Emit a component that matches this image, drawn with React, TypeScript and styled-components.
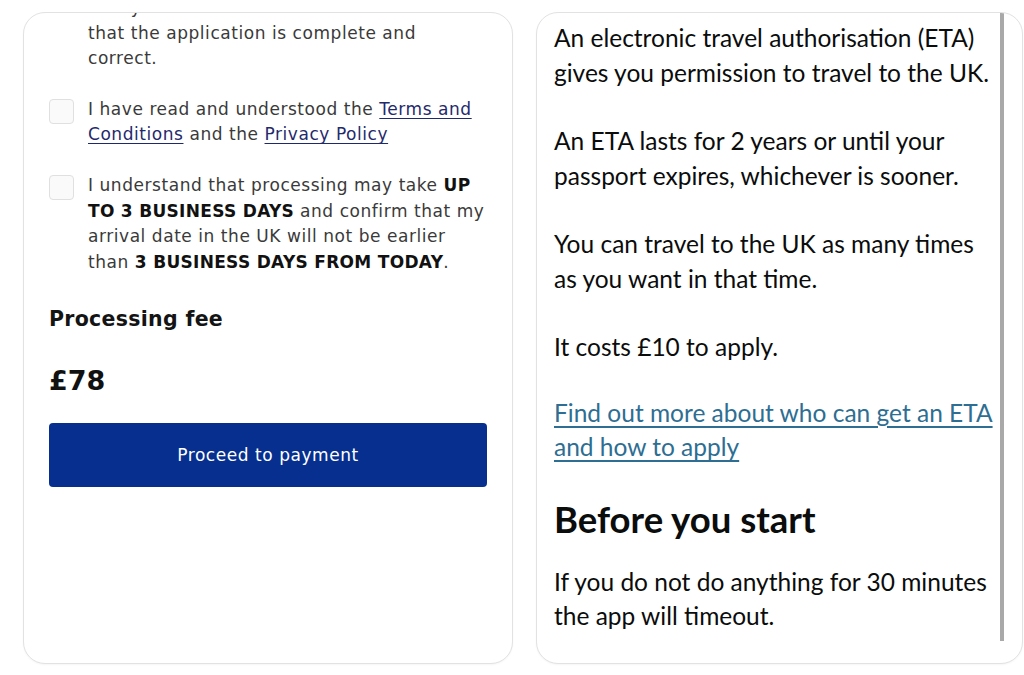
import React from 'react'
import styled, { createGlobalStyle } from 'styled-components'

const GlobalStyle = createGlobalStyle`
    html, body {
        margin: 0;
        padding: 0;
        background: #ffffff;
    }
    * {
        box-sizing: border-box;
    }
`

const App: React.FC = () => {
    return (
        <>
            <GlobalStyle />
            <Page>
                <Card>
                    <LeftContent>
                        <CheckRow>
                            <BoxSpacer />
                            <CheckText>
                                else you must have confirmed with them that the application is complete and correct.
                            </CheckText>
                        </CheckRow>
                        <CheckRow>
                            <CheckBox />
                            <CheckText>
                                I have read and understood the <SmallLink>Terms and Conditions</SmallLink> and the <SmallLink>Privacy Policy</SmallLink>
                            </CheckText>
                        </CheckRow>
                        <CheckRow>
                            <CheckBox />
                            <CheckText>
                                I understand that processing may take <b>UP TO 3 BUSINESS DAYS</b> and confirm that my arrival date in the UK will not be earlier than <b>3 BUSINESS DAYS FROM TODAY</b>.
                            </CheckText>
                        </CheckRow>
                        <FeeLabel>Processing fee</FeeLabel>
                        <FeeAmount>£78</FeeAmount>
                        <PayButton>Proceed to payment</PayButton>
                    </LeftContent>
                </Card>
                <Card>
                    <RightContent>
                        <Para>An electronic travel authorisation (ETA) gives you permission to travel to the UK.</Para>
                        <Para>An ETA lasts for 2 years or until your passport expires, whichever is sooner.</Para>
                        <Para>You can travel to the UK as many times as you want in that time.</Para>
                        <Para $gap={31}>It costs £10 to apply.</Para>
                        <Para><BigLink>Find out more about who can get an ETA and how to apply</BigLink></Para>
                        <Heading>Before you start</Heading>
                        <Para $gap={0}>If you do not do anything for 30 minutes the app will timeout.</Para>
                    </RightContent>
                    <ScrollThumb />
                </Card>
            </Page>
        </>
    )
}

const Page = styled.div`
    width: 1024px;
    height: 675px;
    display: grid;
    grid-template-columns: 490px 487px;
    column-gap: 23px;
    padding: 12px 0 11px 23px;
`
const Card = styled.div`
    position: relative;
    height: 652px;
    border: 1px solid #e2e2e2;
    border-radius: 22px;
    overflow: hidden;
    background: #ffffff;
    box-shadow: 0 1px 2px rgba(0,0,0,.04);
`
const LeftContent = styled.div`
    margin-top: -18px;
    padding: 0 20px 0 25px;
    font-family: "DejaVu Sans", "Noto Sans", sans-serif;
    color: #3a3a3a;
`
const CheckRow = styled.div`
    display: flex;
    align-items: flex-start;
    gap: 14px;
    margin-bottom: 25px;
`
const CheckBox = styled.div`
    flex: 0 0 25px;
    height: 25px;
    margin-top: 2px;
    border: 1px solid #e0e0e0;
    border-radius: 4px;
    background: #fafafa;
`
const BoxSpacer = styled.div`
    flex: 0 0 25px;
`
const CheckText = styled.div`
    max-width: 399px;
    font-size: 17px;
    line-height: 25.6px;
    letter-spacing: 0.55px;
    b {
        font-weight: 700;
        color: #111111;
        letter-spacing: 0.3px;
    }
`
const SmallLink = styled.span`
    color: #1f2a6d;
    text-decoration: underline;
    text-underline-offset: 3px;
    text-decoration-thickness: 1px;
`
const FeeLabel = styled.div`
    margin-top: 30px;
    font-size: 20.5px;
    font-weight: 700;
    color: #141414;
    line-height: 28px;
    letter-spacing: 0.3px;
`
const FeeAmount = styled.div`
    margin-top: 31px;
    font-size: 27px;
    font-weight: 700;
    color: #111111;
    line-height: 34px;
`
const PayButton = styled.div`
    margin-top: 25px;
    margin-right: 5px;
    height: 64px;
    border-radius: 4px;
    background: #062f8f;
    color: #ffffff;
    display: flex;
    align-items: center;
    justify-content: center;
    font-size: 17px;
    letter-spacing: 0.55px;
`
const RightContent = styled.div`
    padding: 8px 22px 0 17px;
    font-family: Lato, "Noto Sans", sans-serif;
    color: #0b0c0c;
`
const Para = styled.p<{ $gap?: number }>`
    margin: 0 0 ${p => p.$gap ?? 34}px 0;
    font-size: 24.5px;
    line-height: 34.5px;
`
const BigLink = styled.span`
    color: #2d6e92;
    text-decoration: underline;
    text-decoration-thickness: 2px;
    text-underline-offset: 4px;
`
const Heading = styled.h2`
    margin: 3px 0 26px 0;
    font-size: 36.5px;
    line-height: 40px;
    font-weight: 700;
    letter-spacing: 0;
    color: #0b0c0c;
`
const ScrollThumb = styled.div`
    position: absolute;
    top: 0;
    right: 18px;
    width: 4px;
    height: 628px;
    background: #a9a9a9;
`

export default App
